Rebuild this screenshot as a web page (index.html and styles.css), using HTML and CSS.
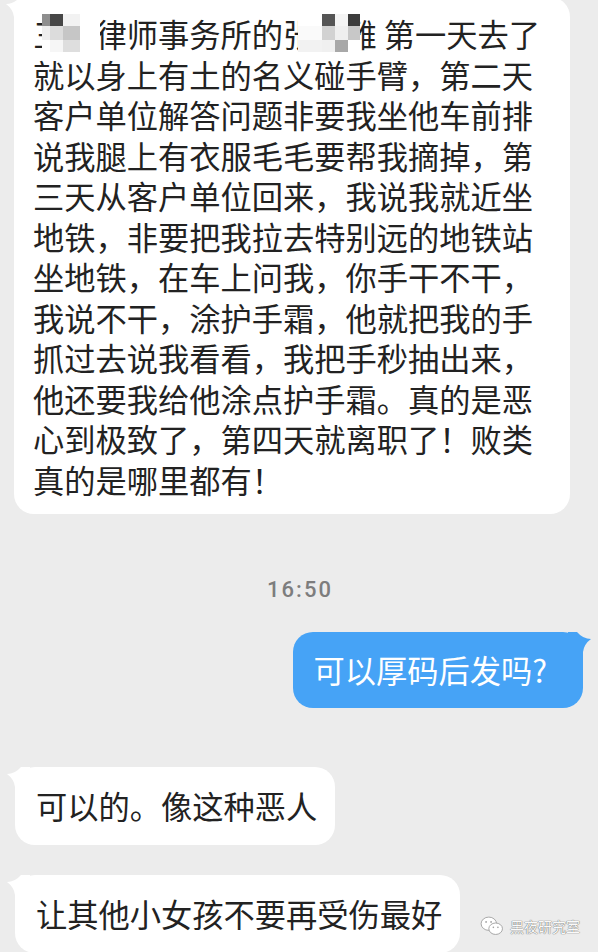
FILE: index.html
```html
<!DOCTYPE html>
<html lang="zh-CN">
<head>
<meta charset="utf-8">
<title>聊天记录</title>
<link rel="stylesheet" href="styles.css">
</head>
<body>
<div class="chat">
  <div class="bubble bubble-in bubble-long">
    <svg class="tail tail-in" viewBox="0 0 24 30" width="24" height="30"><path d="M1 7 Q9 7 15 0 L24 0 L24 30 L9 30 L9 20 Q8 12 1 7 Z"/></svg>
    <p class="text">三<span class="gap"></span>律师事务所的张<span class="gap"></span>雅 第一天去了就以身上有土的名义碰手臂，第二天客户单位解答问题非要我坐他车前排说我腿上有衣服毛毛要帮我摘掉，第三天从客户单位回来，我说我就近坐地铁，非要把我拉去特别远的地铁站坐地铁，在车上问我，你手干不干，我说不干，涂护手霜，他就把我的手抓过去说我看看，我把手秒抽出来，他还要我给他涂点护手霜。真的是恶心到极致了，第四天就离职了！败类真的是哪里都有！</p>
    <div class="mosaic mosaic-a">
      <i class="c1"></i><i class="c2"></i><i class="c3"></i><i class="c0"></i>
      <i class="c4"></i><i class="c5"></i><i class="c6"></i><i class="c0"></i>
      <i class="c0"></i><i class="c7"></i><i class="c8"></i><i class="c0"></i>
    </div>
    <div class="mosaic mosaic-b">
      <i class="c0"></i><i class="d1"></i><i class="d2"></i><i class="d3"></i>
      <i class="d4"></i><i class="d5"></i><i class="d6"></i><i class="d7"></i>
      <i class="d8"></i><i class="d9"></i><i class="d10"></i><i class="c0"></i>
    </div>
  </div>

  <div class="time">16:50</div>

  <div class="bubble bubble-out">
    <svg class="tail tail-out" viewBox="0 0 24 30" width="24" height="30"><path d="M23 7 Q15 7 9 0 L0 0 L0 30 L15 30 L15 20 Q16 12 23 7 Z"/></svg>
    <p class="text">可以厚码后发吗?</p>
  </div>

  <div class="bubble bubble-in bubble-short first-short">
    <svg class="tail tail-in" viewBox="0 0 24 30" width="24" height="30"><path d="M1 7 Q9 7 15 0 L24 0 L24 30 L9 30 L9 20 Q8 12 1 7 Z"/></svg>
    <p class="text">可以的。像这种恶人</p>
  </div>

  <div class="bubble bubble-in bubble-short second-short">
    <svg class="tail tail-in" viewBox="0 0 24 30" width="24" height="30"><path d="M1 7 Q9 7 15 0 L24 0 L24 30 L9 30 L9 20 Q8 12 1 7 Z"/></svg>
    <p class="text">让其他小女孩不要再受伤最好</p>
  </div>
</div>

<div class="watermark">
  <svg class="wx" viewBox="0 0 26 22" width="24" height="20">
    <ellipse cx="9.5" cy="8.5" rx="8.5" ry="7.3" />
    <ellipse cx="17" cy="14" rx="7.5" ry="6.3" />
    <circle cx="6.5" cy="6.5" r="1" class="eye"/>
    <circle cx="12" cy="6.5" r="1" class="eye"/>
    <circle cx="14.5" cy="12.5" r="0.9" class="eye"/>
    <circle cx="19.5" cy="12.5" r="0.9" class="eye"/>
  </svg>
  <span class="wm-text">黑夜研究室</span>
</div>
</body>
</html>
```

FILE: styles.css
```css
html, body {
  margin: 0;
  padding: 0;
}

body {
  width: 598px;
  height: 952px;
  overflow: hidden;
  background: #ececec;
  font-family: "Noto Sans CJK SC", "Noto Sans", sans-serif;
  position: relative;
}

.chat {
  display: flex;
  flex-direction: column;
  align-items: flex-start;
}

.bubble {
  position: relative;
  background: #ffffff;
  border-radius: 20px;
  box-sizing: border-box;
}

.text {
  margin: 0;
  font-size: 31.25px;
  line-height: 40px;
  color: #222222;
}

.bubble-long {
  margin: -3px 0 0 14px;
  width: 556px;
  padding: 17px 22px 14px 19px;
}

.bubble-long .text {
  line-height: 40.5px;
}

.gap {
  display: inline-block;
  width: 1em;
  height: 1em;
}

.mosaic {
  position: absolute;
  top: 13px;
  padding-top: 4px;
  display: grid;
  grid-template-rows: 12px 14px 12px;
  background: #ffffff;
}

.mosaic i {
  display: block;
}

.mosaic-a {
  left: 28px;
  grid-template-columns: 8px 13px 17px 20px;
}

.mosaic-b {
  left: 284px;
  grid-template-columns: 24px 13px 13px 12px;
}

.c0 { background: #ffffff; }
.c1 { background: #8e8e8e; }
.c2 { background: #464646; }
.c3 { background: #f2f2f2; }
.c4 { background: #eeeeee; }
.c5 { background: #dcdcdc; }
.c6 { background: #c6c6c6; }
.c7 { background: #f6f6f6; }
.c8 { background: #dedede; }

.d1 { background: #555555; }
.d2 { background: #f4f4f4; }
.d3 { background: #3c3c3c; }
.d4 { background: #fafafa; }
.d5 { background: #d2d2d2; }
.d6 { background: #efefef; }
.d7 { background: #c8c8c8; }
.d8 { background: #f2f2f2; }
.d9 { background: #f0f0f0; }
.d10 { background: #a8a8a8; }

.tail {
  position: absolute;
  top: 0;
  display: block;
}

.tail-in {
  left: -9px;
  fill: #ffffff;
}

.tail-out {
  right: -9px;
  fill: #46a3f6;
}

.time {
  align-self: center;
  margin-top: 64px;
  font-family: Roboto, "Liberation Sans", sans-serif;
  font-weight: 500;
  font-size: 22px;
  line-height: 24px;
  letter-spacing: 2px;
  color: #7d7d7d;
  padding-left: 2px;
}

.bubble-out {
  align-self: flex-end;
  margin: 30px 15px 0 0;
  background: #46a3f6;
  padding: 18px 36px 18px 20px;
}

.bubble-out .text {
  color: #ffffff;
}

.bubble-short {
  margin-left: 15px;
  padding: 19px 18px 19px 21px;
}

.first-short {
  margin-top: 59px;
}

.second-short {
  margin-top: 30px;
}

.watermark {
  position: absolute;
  left: 480px;
  top: 916px;
  display: flex;
  align-items: center;
  gap: 6px;
}

.wx ellipse {
  fill: #ffffff;
  stroke: #a0a0a0;
  stroke-width: 1;
}

.wx .eye {
  fill: #a0a0a0;
}

.wm-text {
  font-family: "Noto Sans CJK SC", sans-serif;
  font-size: 14px;
  line-height: 20px;
  color: #fafafa;
  text-shadow: 0 0 1px #6a6a6a, 0 0 1px #6a6a6a;
}
```
